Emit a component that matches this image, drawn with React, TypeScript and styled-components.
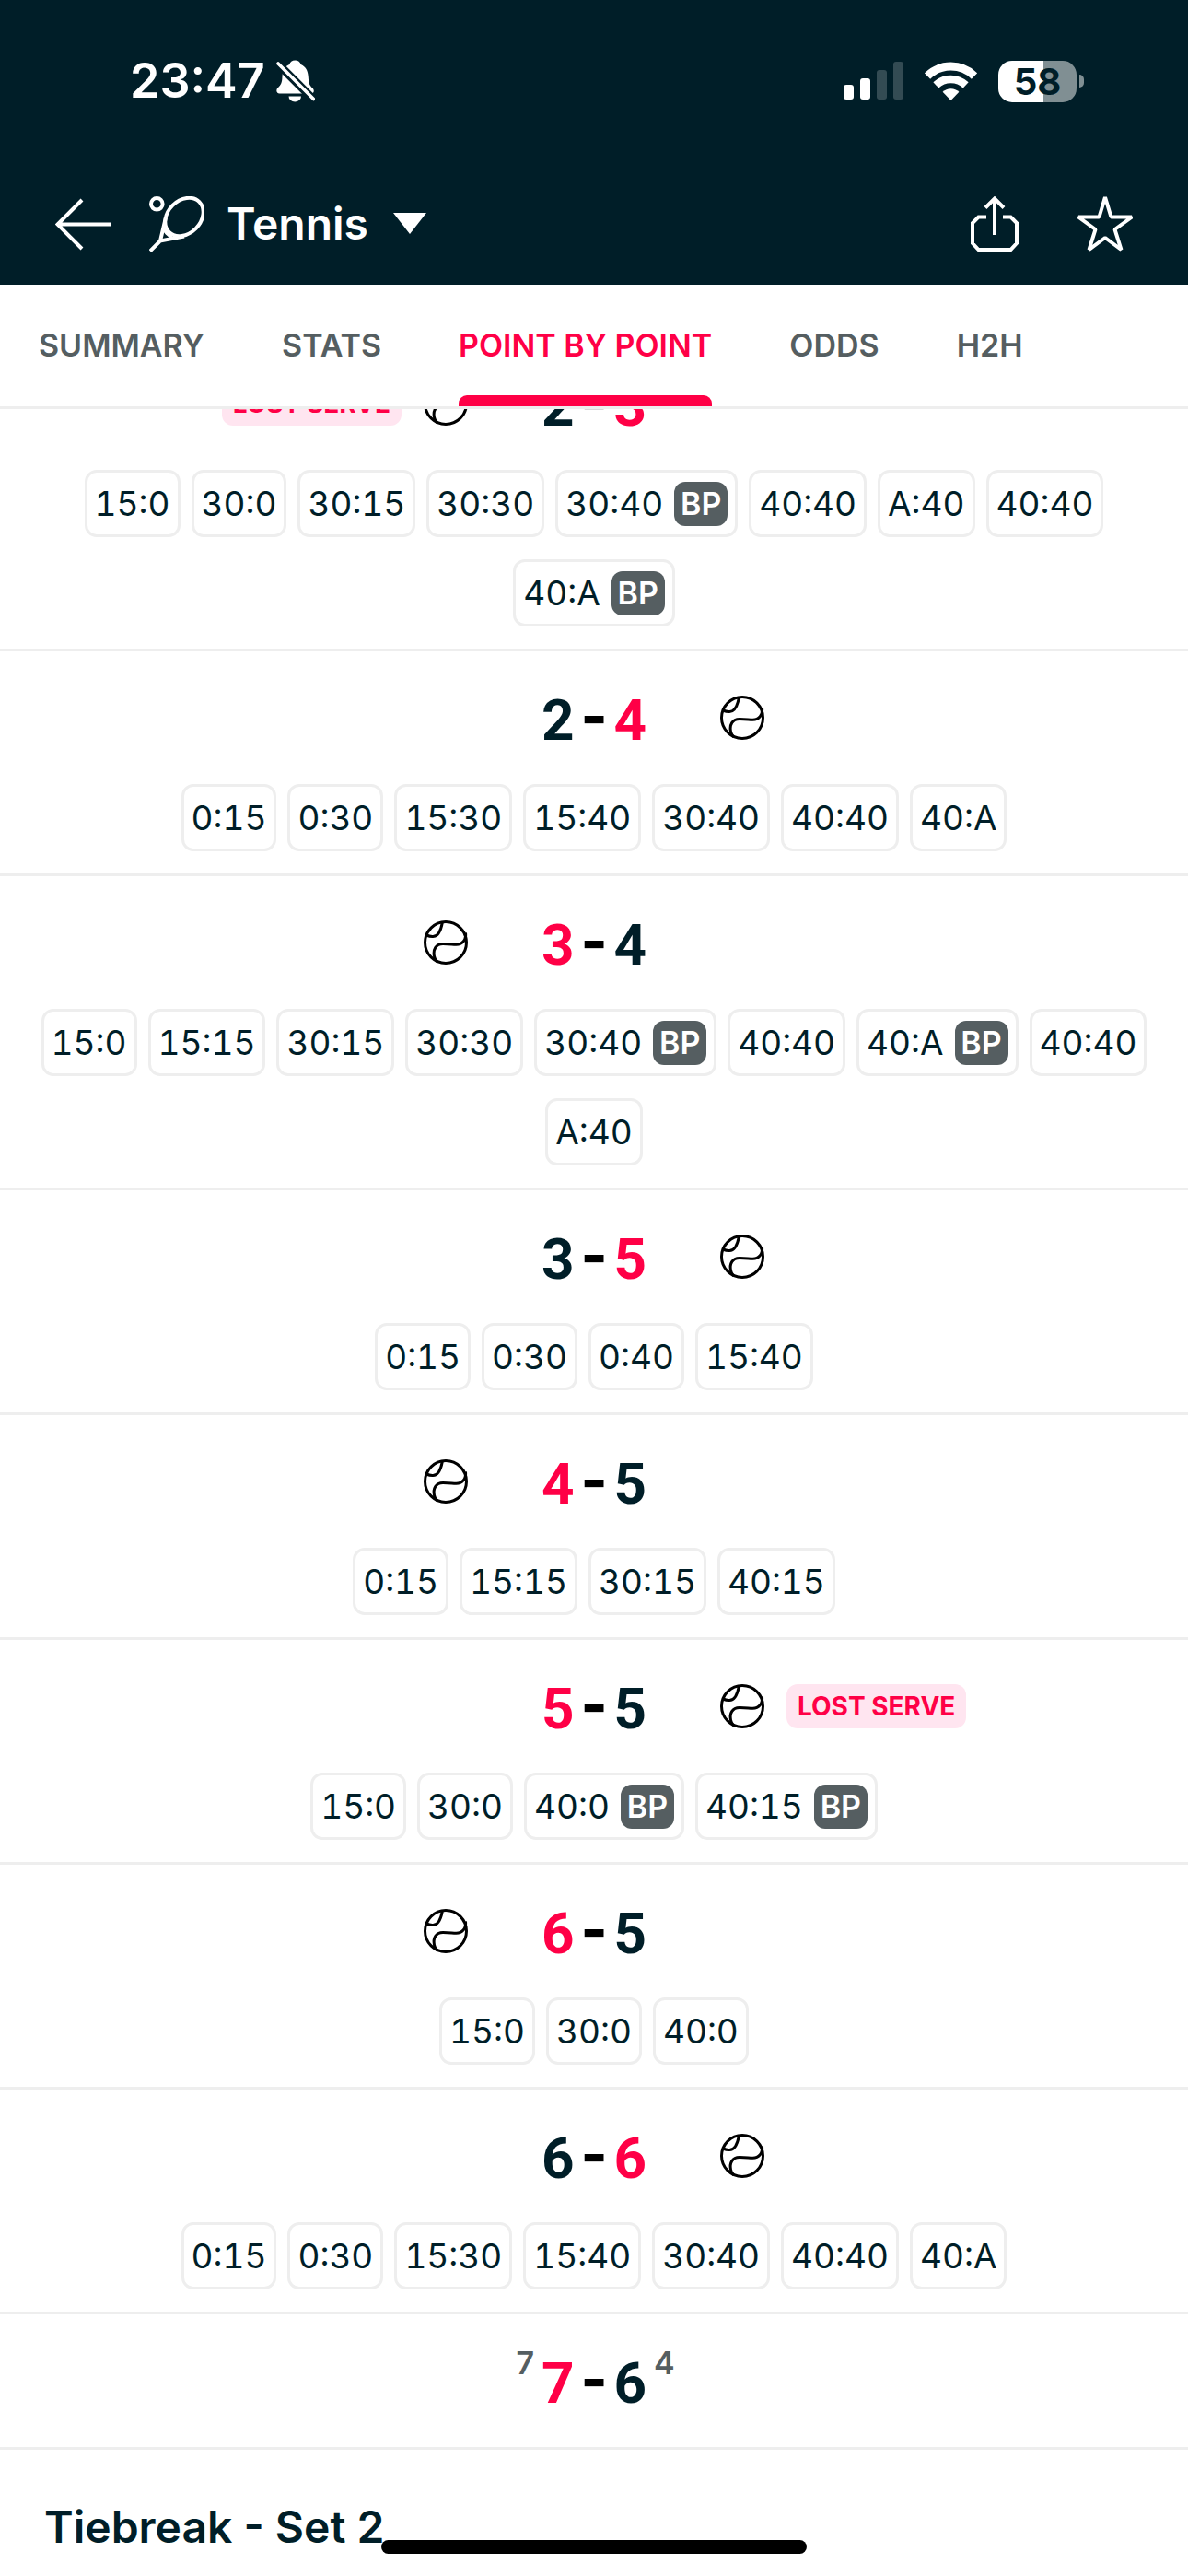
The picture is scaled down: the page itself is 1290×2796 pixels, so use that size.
import React from "react";
import styled, { createGlobalStyle } from "styled-components";

const ink = "#001e28";
const pink = "#ff0046";
const grey = "#555e61";
const line = "#eeeeee";

const GlobalStyle = createGlobalStyle`
  *, *::before, *::after { box-sizing: border-box; }
  body { margin: 0; background: #ffffff; }
  button { font: inherit; }
`;

const Screen = styled.div`
  min-height: 100vh;
  overflow: hidden;
  background: #ffffff;
  color: ${ink};
  font-family: Inter, "Liberation Sans", sans-serif;
`;

const Header = styled.header`
  background: ${ink};
  color: #ffffff;
`;

const StatusBar = styled.div`
  display: flex;
  align-items: center;
  justify-content: space-between;
  height: 176px;
  padding: 0 113px 0 141px;
`;

const StatusGroup = styled.div<{ $gap: number }>`
  display: flex;
  align-items: center;
  gap: ${(p) => p.$gap}px;
`;

const Clock = styled.time`
  font-size: 52px;
  font-weight: 600;
  line-height: 60px;
`;

const Battery = styled.div`
  display: flex;
  align-items: center;
  gap: 3px;
`;

const BatteryBody = styled.div`
  width: 85px;
  height: 45px;
  border-radius: 15px;
  background: linear-gradient(90deg, #ffffff 58%, #808f93 58%);
  color: ${ink};
  font-size: 40px;
  font-weight: 700;
  line-height: 45px;
  text-align: center;
`;

const BatteryTip = styled.div`
  width: 5px;
  height: 14px;
  border-radius: 0 5px 5px 0;
  background: #808f93;
`;

const AppBar = styled.div`
  display: flex;
  align-items: center;
  height: 133px;
  padding: 0 60px;
`;

const IconButton = styled.button`
  display: flex;
  padding: 0;
  border: 0;
  background: none;
  color: inherit;
`;

const SportButton = styled(IconButton)`
  align-items: center;
  gap: 24px;
  margin-left: 42px;
  font-size: 48px;
  font-weight: 600;
  line-height: 60px;
`;

const SportName = styled.span`
  display: flex;
  align-items: center;
  gap: 27px;
`;

const Actions = styled.div`
  display: flex;
  gap: 64px;
  margin-left: auto;
`;

const Tabs = styled.nav`
  display: flex;
  gap: 84px;
  height: 135px;
  padding: 0 42px;
  border-bottom: 3px solid ${line};
`;

const Tab = styled.a<{ $active?: boolean }>`
  display: flex;
  flex-direction: column;
  color: ${(p) => (p.$active ? pink : grey)};
  font-size: 34px;
  font-weight: 600;
  line-height: 132px;
  text-decoration: none;
  white-space: nowrap;

  &::after {
    content: "";
    height: 12px;
    margin-top: -12px;
    border-radius: 9px 9px 0 0;
    background: ${(p) => (p.$active ? pink : "transparent")};
  }
`;

const Viewport = styled.main`
  overflow: hidden;
`;

const Games = styled.div`
  margin-top: -78px;
`;

const Game = styled.section`
  display: flex;
  flex-direction: column;
  gap: 48px;
  padding: 48px 36px 24px;
  border-bottom: 3px solid ${line};
`;

const PlainGame = styled(Game)`
  padding-bottom: 48px;
`;

const ScoreRow = styled.div`
  display: grid;
  grid-template-columns: 1fr 114px 1fr;
  grid-template-rows: 48px;
`;

const Side = styled.div<{ $right?: boolean; $tie?: boolean }>`
  display: flex;
  flex-direction: ${(p) => (p.$right ? "row" : "row-reverse")};
  align-items: center;
  gap: 24px;
  padding: 0 ${(p) => (p.$tie ? 8 : 80)}px;
`;

const Score = styled.div`
  display: flex;
  justify-content: space-between;
  font-size: 62px;
  font-weight: 700;
  line-height: 54px;
`;

const Digit = styled.span<{ $won?: boolean }>`
  font-family: Roboto, "Liberation Sans", sans-serif;
  color: ${(p) => (p.$won ? pink : ink)};
`;

const Dash = styled.span`
  color: #000000;
  font-weight: 800;
  font-feature-settings: "case";
`;

const TieScore = styled.sup`
  padding-bottom: 38px;
  color: ${grey};
  font-size: 34px;
  font-weight: 600;
  line-height: 40px;
`;

const LostServe = styled.span`
  height: 48px;
  padding: 0 12px;
  border-radius: 12px;
  background: #ffe5f0;
  color: ${pink};
  font-size: 28px;
  font-weight: 700;
  line-height: 48px;
  white-space: nowrap;
`;

const Points = styled.ol`
  display: flex;
  flex-wrap: wrap;
  justify-content: center;
  gap: 24px 12px;
  margin: 0;
  padding: 0;
  list-style: none;
`;

const Point = styled.li`
  display: flex;
  align-items: center;
  gap: 12px;
  height: 73px;
  padding: 0 8px;
  border: 3px solid ${line};
  border-radius: 13px;
  font-size: 37px;
  line-height: 48px;
  font-variant-numeric: tabular-nums;
`;

const BreakPoint = styled.abbr`
  width: 58px;
  height: 48px;
  border-radius: 12px;
  background: ${grey};
  color: #ffffff;
  font-size: 34px;
  font-weight: 600;
  line-height: 48px;
  text-align: center;
`;

const SectionTitle = styled.h2`
  margin: 0;
  padding: 54px 48px 23px;
  font-size: 48px;
  font-weight: 600;
  line-height: 60px;
`;

const HomeIndicator = styled.div`
  position: fixed;
  bottom: 24px;
  left: 50%;
  width: 462px;
  height: 15px;
  margin-left: -231px;
  border-radius: 8px;
  background: #000000;
`;

const BellOff = () => (
  <svg width="42" height="46" viewBox="0 0 42 46" aria-hidden="true">
    <path
      fill="#fff"
      d="M20.500.5c3.400 0 5.500 1.800 6.300 4.500C32 7.300 34.300 12 34.700 18c.5 7.500 1.300 9.500 4.600 12.500 2.500 2.500 1.700 6-1.600 6H3.500C0 36.500-.5 32.500 1.500 30.500 5.300 27 6.200 25 6.500 18 6.800 11.500 9 7.300 14.200 5 15 2.300 17 .5 20.500.5Z"
    />
    <path fill="#fff" d="M13.500 39.500h13.500a6.700 6 0 0 1-13.500 0Z" />
    <path stroke={ink} strokeWidth="9" d="M0 2.500l42 42" />
    <path stroke="#fff" strokeWidth="3.600" strokeLinecap="round" d="M2 4l38.500 38.500" />
  </svg>
);

const Signal = () => (
  <svg width="65" height="42" viewBox="0 0 65 42" role="img" aria-label="Signal">
    <g fill="#fff">
      <rect x="0" y="25" width="11" height="16" rx="3" />
      <rect x="18" y="18" width="11" height="23" rx="3" />
      <rect x="36" y="9" width="11" height="32" rx="3" opacity=".2" />
      <rect x="54" y="0" width="11" height="41" rx="3" opacity=".2" />
    </g>
  </svg>
);

const Wifi = () => (
  <svg width="57" height="42" viewBox="0 0 57 42" role="img" aria-label="Wi-Fi">
    <g fill="none" stroke="#fff">
      <path strokeWidth="9" d="M3 15.500a36.500 36.500 0 0 1 51 0" />
      <path strokeWidth="8.500" d="M12.300 25.400a23.500 23.500 0 0 1 32.400 0" />
    </g>
    <path fill="#fff" d="M28.500 42l-8.900-9.200a13 13 0 0 1 17.800 0Z" />
  </svg>
);

const BackArrow = () => (
  <svg width="60" height="60" viewBox="0 0 60 60" fill="none" stroke="currentColor" strokeWidth="4" aria-hidden="true">
    <path d="M60 30.500H2M29 4L2.500 30.500 29 57" />
  </svg>
);

const Racket = () => (
  <svg width="60" height="60" viewBox="0 0 60 60" fill="none" stroke="currentColor" strokeWidth="4" aria-hidden="true">
    <circle cx="8.300" cy="8.300" r="6.300" />
    <ellipse cx="38" cy="22.500" rx="23.200" ry="17.800" transform="rotate(-45 38 22.500)" />
    <path d="M18 23L12 48.500 38 43.500M12 48.500L1 59.500M16.500 33.500q1 8 8.500 10" />
  </svg>
);

const Caret = () => (
  <svg width="36" height="23" viewBox="0 0 36 23" aria-hidden="true">
    <path fill="currentColor" d="M0 0h36L18 23Z" />
  </svg>
);

const Share = () => (
  <svg width="52" height="60" viewBox="0 0 52 60" fill="none" stroke="currentColor" strokeWidth="4" aria-hidden="true">
    <path d="M17 22.500H8.500L2 29v22l6.500 7h35l6.500-7V29l-6.500-6.500H35M26 42V3M16 12.500L26 2.500l10 10" />
  </svg>
);

const Star = () => (
  <svg width="60" height="60" viewBox="0 0 60 60" fill="none" stroke="currentColor" strokeWidth="4" strokeLinejoin="bevel" aria-hidden="true">
    <path d="M30 1l6.500 21.500H59L40.500 36l7 22L30 45 12.500 58l7-22L1 22.500h22.500Z" />
  </svg>
);

const Ball = () => (
  <svg width="48" height="48" viewBox="0 0 48 48" fill="none" stroke="#000" strokeWidth="3" role="img" aria-label="Serving">
    <circle cx="24" cy="24" r="22.500" />
    <path d="M20.300 2.500C19 9.500 16 18 9.500 17.500Q6.500 17.500 3 16M45.500 13.500C46.500 21 42 26.500 35 26.300 30 26 27 25.500 21 25.500 13 25.500 10 32 11.500 39Q12 42 14.500 45" />
  </svg>
);

type Serve = "home" | "away";

interface GameData {
  score: [number, number];
  won: Serve;
  serve?: Serve;
  lost?: boolean;
  tie?: [number, number];
  points?: string[];
}

const games: GameData[] = [
  { score: [2, 3], won: "away", serve: "home", lost: true, points: ["15:0", "30:0", "30:15", "30:30", "30:40 BP", "40:40", "A:40", "40:40", "40:A BP"] },
  { score: [2, 4], won: "away", serve: "away", points: ["0:15", "0:30", "15:30", "15:40", "30:40", "40:40", "40:A"] },
  { score: [3, 4], won: "home", serve: "home", points: ["15:0", "15:15", "30:15", "30:30", "30:40 BP", "40:40", "40:A BP", "40:40", "A:40"] },
  { score: [3, 5], won: "away", serve: "away", points: ["0:15", "0:30", "0:40", "15:40"] },
  { score: [4, 5], won: "home", serve: "home", points: ["0:15", "15:15", "30:15", "40:15"] },
  { score: [5, 5], won: "home", serve: "away", lost: true, points: ["15:0", "30:0", "40:0 BP", "40:15 BP"] },
  { score: [6, 5], won: "home", serve: "home", points: ["15:0", "30:0", "40:0"] },
  { score: [6, 6], won: "away", serve: "away", points: ["0:15", "0:30", "15:30", "15:40", "30:40", "40:40", "40:A"] },
  { score: [7, 6], won: "home", tie: [7, 4] },
];

function SideInfo({ game, side }: { game: GameData; side: Serve }) {
  return (
    <Side $right={side === "away"} $tie={Boolean(game.tie)}>
      {game.serve === side && <Ball />}
      {game.serve === side && game.lost && <LostServe>LOST SERVE</LostServe>}
      {game.tie && <TieScore>{game.tie[side === "home" ? 0 : 1]}</TieScore>}
    </Side>
  );
}

function GameRow({ game }: { game: GameData }) {
  const Box = game.points ? Game : PlainGame;
  return (
    <Box>
      <ScoreRow>
        <SideInfo game={game} side="home" />
        <Score>
          <Digit $won={game.won === "home"}>{game.score[0]}</Digit>
          <Dash>-</Dash>
          <Digit $won={game.won === "away"}>{game.score[1]}</Digit>
        </Score>
        <SideInfo game={game} side="away" />
      </ScoreRow>
      {game.points && (
        <Points>
          {game.points.map((entry, i) => {
            const [value, flag] = entry.split(" ");
            return (
              <Point key={i}>
                <span>{value}</span>
                {flag && <BreakPoint>{flag}</BreakPoint>}
              </Point>
            );
          })}
        </Points>
      )}
    </Box>
  );
}

export default function App() {
  return (
    <Screen>
      <GlobalStyle />
      <Header>
        <StatusBar>
          <StatusGroup $gap={12}>
            <Clock>23:47</Clock>
            <BellOff />
          </StatusGroup>
          <StatusGroup $gap={23}>
            <Signal />
            <Wifi />
            <Battery>
              <BatteryBody>58</BatteryBody>
              <BatteryTip />
            </Battery>
          </StatusGroup>
        </StatusBar>
        <AppBar>
          <IconButton aria-label="Back">
            <BackArrow />
          </IconButton>
          <SportButton>
            <Racket />
            <SportName>
              Tennis
              <Caret />
            </SportName>
          </SportButton>
          <Actions>
            <IconButton aria-label="Share">
              <Share />
            </IconButton>
            <IconButton aria-label="Add to favourites">
              <Star />
            </IconButton>
          </Actions>
        </AppBar>
      </Header>
      <Tabs>
        <Tab href="#summary">SUMMARY</Tab>
        <Tab href="#stats">STATS</Tab>
        <Tab href="#points" $active aria-current="page">POINT BY POINT</Tab>
        <Tab href="#odds">ODDS</Tab>
        <Tab href="#h2h">H2H</Tab>
      </Tabs>
      <Viewport>
        <Games>
          {games.map((game, i) => (
            <GameRow key={i} game={game} />
          ))}
        </Games>
        <SectionTitle>Tiebreak - Set 2</SectionTitle>
      </Viewport>
      <HomeIndicator />
    </Screen>
  );
}
